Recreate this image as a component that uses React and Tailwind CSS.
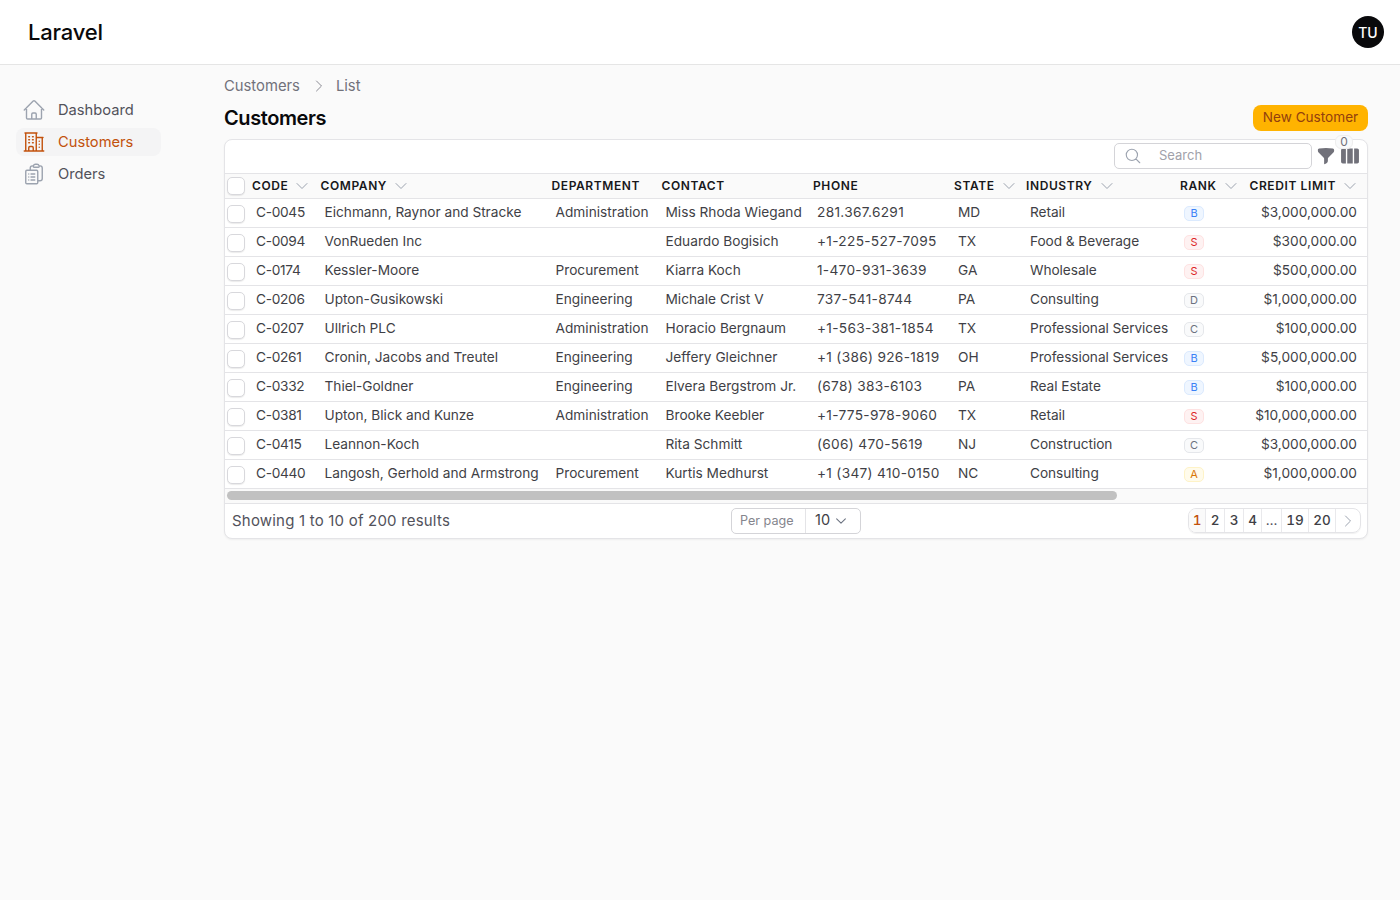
const home = "m2.25 12 8.954-8.955c.44-.439 1.152-.439 1.591 0L21.75 12M4.5 9.75v10.125c0 .621.504 1.125 1.125 1.125H9.75v-4.875c0-.621.504-1.125 1.125-1.125h2.25c.621 0 1.125.504 1.125 1.125V21h4.125c.621 0 1.125-.504 1.125-1.125V9.75M8.25 21h8.25";
const office = "M2.25 21h19.5m-18-18v18m10.5-18v18m6-13.5V21M6.75 6.75h.75m-.75 3h.75m-.75 3h.75m3-6h.75m-.75 3h.75m-.75 3h.75M6.75 21v-3.375c0-.621.504-1.125 1.125-1.125h2.25c.621 0 1.125.504 1.125 1.125V21M3 3h12m-.75 4.5H21m-3.75 3.75h.008v.008h-.008v-.008Zm0 3h.008v.008h-.008v-.008Zm0 3h.008v.008h-.008v-.008Z";
const clip = "M9 12h3.75M9 15h3.75M9 18h3.75m3 .75H18a2.25 2.25 0 0 0 2.25-2.25V6.108c0-1.135-.845-2.098-1.976-2.192a48.424 48.424 0 0 0-1.123-.08m-5.801 0c-.065.21-.1.433-.1.664 0 .414.336.75.75.75h4.5a.75.75 0 0 0 .75-.75 2.25 2.25 0 0 0-.1-.664m-5.8 0A2.251 2.251 0 0 1 13.5 2.25H15c1.012 0 1.867.668 2.15 1.586m-5.8 0c-.376.023-.75.05-1.124.08C9.095 4.01 8.25 4.973 8.25 6.108V8.25m0 0H4.875c-.621 0-1.125.504-1.125 1.125v11.25c0 .621.504 1.125 1.125 1.125h9.75c.621 0 1.125-.504 1.125-1.125V9.375c0-.621-.504-1.125-1.125-1.125H8.25ZM6.75 12h.008v.008H6.75V12Zm0 3h.008v.008H6.75V15Zm0 3h.008v.008H6.75V18Z";
const funnel = "M3.792 2.938A49.069 49.069 0 0 1 12 2.25c2.797 0 5.54.236 8.209.688a1.857 1.857 0 0 1 1.541 1.836v1.044a3 3 0 0 1-.879 2.121l-6.182 6.182a1.5 1.5 0 0 0-.439 1.061v2.927a3 3 0 0 1-1.658 2.684l-1.757.878A.75.75 0 0 1 9.75 21v-5.818a1.5 1.5 0 0 0-.44-1.06L3.13 7.938a3 3 0 0 1-.879-2.121V4.774c0-.897.64-1.683 1.542-1.836Z";
const columns = "M15 3.75H9v16.5h6V3.75ZM16.5 20.25h3.375c1.035 0 1.875-.84 1.875-1.875V5.625c0-1.036-.84-1.875-1.875-1.875H16.5v16.5ZM4.125 3.75H7.5v16.5H4.125a1.875 1.875 0 0 1-1.875-1.875V5.625c0-1.036.84-1.875 1.875-1.875Z";
const search = "m21 21-5.197-5.197m0 0A7.5 7.5 0 1 0 5.196 5.196a7.5 7.5 0 0 0 10.607 10.607Z";
const down = "m19.5 8.25-7.5 7.5-7.5-7.5";
const right = "m8.25 4.5 7.5 7.5-7.5 7.5";

function Stroke({ d, className, sw = 1.5 }) {
  return (
    <svg viewBox="0 0 24 24" fill="none" stroke="currentColor" strokeWidth={sw} strokeLinecap="round" strokeLinejoin="round" className={className}>
      <path d={d} />
    </svg>
  );
}
function Solid({ d, className }) {
  return (
    <svg viewBox="0 0 24 24" fill="currentColor" className={className}>
      <path d={d} fillRule="evenodd" clipRule="evenodd" />
    </svg>
  );
}

const rows = [
  ["C-0045", "Eichmann, Raynor and Stracke", "Administration", "Miss Rhoda Wiegand", "281.367.6291", "MD", "Retail", "B", "$3,000,000.00"],
  ["C-0094", "VonRueden Inc", "", "Eduardo Bogisich", "+1-225-527-7095", "TX", "Food & Beverage", "S", "$300,000.00"],
  ["C-0174", "Kessler-Moore", "Procurement", "Kiarra Koch", "1-470-931-3639", "GA", "Wholesale", "S", "$500,000.00"],
  ["C-0206", "Upton-Gusikowski", "Engineering", "Michale Crist V", "737-541-8744", "PA", "Consulting", "D", "$1,000,000.00"],
  ["C-0207", "Ullrich PLC", "Administration", "Horacio Bergnaum", "+1-563-381-1854", "TX", "Professional Services", "C", "$100,000.00"],
  ["C-0261", "Cronin, Jacobs and Treutel", "Engineering", "Jeffery Gleichner", "+1 (386) 926-1819", "OH", "Professional Services", "B", "$5,000,000.00"],
  ["C-0332", "Thiel-Goldner", "Engineering", "Elvera Bergstrom Jr.", "(678) 383-6103", "PA", "Real Estate", "B", "$100,000.00"],
  ["C-0381", "Upton, Blick and Kunze", "Administration", "Brooke Keebler", "+1-775-978-9060", "TX", "Retail", "S", "$10,000,000.00"],
  ["C-0415", "Leannon-Koch", "", "Rita Schmitt", "(606) 470-5619", "NJ", "Construction", "C", "$3,000,000.00"],
  ["C-0440", "Langosh, Gerhold and Armstrong", "Procurement", "Kurtis Medhurst", "+1 (347) 410-0150", "NC", "Consulting", "A", "$1,000,000.00"],
];

const colClass = [
  "tracking-[-0.3px]",
  "tracking-[-0.02px]",
  "",
  "",
  "tracking-[0.3px]",
  "",
  "tracking-[-0.07px]",
];

const rankStyle = {
  B: "bg-[#eff6ff] border-[#dbeafe] text-[#3b82f6]",
  S: "bg-[#fef2f2] border-[#fee2e2] text-[#dc2626]",
  D: "bg-[#f9fafb] border-[#e5e7eb] text-[#6b7280]",
  C: "bg-[#f9fafb] border-[#e5e7eb] text-[#6b7280]",
  A: "bg-[#fffbeb] border-[#fef3c7] text-[#d97706]",
};

function Check() {
  return <span className="block h-[18px] w-[18px] rounded-[5px] border border-[#d8d8dc] bg-white shadow-[0_1px_1px_rgba(0,0,0,0.08)]" />;
}

function Head({ label, sort, width }) {
  return (
    <th className="pl-1 pt-[1px] text-left font-semibold" style={{ width }}>
      <span className="flex items-center">
        <span className="text-[12px] leading-4 tracking-[0.6px] text-[#18181b]">{label}</span>
        {sort && <Stroke d={down} className="ml-[6px] h-4 w-4 text-[#9ca3af]" />}
      </span>
    </th>
  );
}

const nav = [
  ["Dashboard", home, false],
  ["Customers", office, true],
  ["Orders", clip, false],
];

const pages = [
  ["1", "w-[17px] bg-[#fafafa] text-[#c2510c]"],
  ["2", "w-[19px] text-[#3f3f46]"],
  ["3", "w-[19px] text-[#3f3f46]"],
  ["4", "w-[18px] text-[#3f3f46]"],
  ["…", "w-[20px] font-normal text-[#52525b]"],
  ["19", "w-[27px] text-[#3f3f46]"],
  ["20", "w-[27px] text-[#3f3f46]"],
];

export default function App() {
  return (
    <div className="min-h-[900px] bg-[#fafafa] font-['Inter',sans-serif] text-[13.7px] text-[#3f3f46]">
      <header className="flex h-[65px] items-center justify-between border-b border-[#e5e5e5] bg-white pl-[28px] pr-[16px]">
        <span className="text-[22px] font-medium tracking-[-0.2px] text-[#09090b]">Laravel</span>
        <span className="flex h-8 w-8 items-center justify-center rounded-full bg-[#09090b] text-[14px] font-medium text-white">TU</span>
      </header>
      <div className="flex">
        <aside className="w-[224px] shrink-0 pl-[16px] pt-[31px]">
          {nav.map(([label, d, active]) => (
            <div key={label} className={`mb-1 flex h-[28px] w-[145px] items-center rounded-lg pl-[6px] ${active ? "bg-[#f4f4f5] text-[#c2510c]" : "text-[#52525b]"}`}>
              <Stroke d={d} className={`h-6 w-6 ${active ? "text-[#c2510c]" : "text-[#9ca3af]"}`} sw={1.4} />
              <span className="ml-3 text-[14.7px]">{label}</span>
            </div>
          ))}
        </aside>
        <main className="w-[1144px]">
          <div className="flex h-[40px] items-center pt-[2px] text-[14.8px] text-[#71717a]">
            <span>Customers</span>
            <Stroke d={right} className="ml-[11px] mr-[9px] h-4 w-4 text-[#8b8b94]" />
            <span>List</span>
          </div>
          <div className="flex h-[26px] items-center justify-between">
            <h1 className="text-[20px] font-semibold tracking-[-0.4px] text-[#09090b]">Customers</h1>
            <button className="h-[26px] w-[115px] rounded-lg bg-[#ffb300] pb-[1px] text-[13.6px] text-[#92400e]">New Customer</button>
          </div>
          <section className="mt-2 rounded-lg border border-[#e4e4e7] bg-white shadow-[0_1px_2px_rgba(0,0,0,0.05)]">
            <div className="flex h-[34px] items-center justify-end border-b border-[#e4e4e7] pb-[2px] pr-[6px]">
              <div className="flex h-[26px] w-[198px] items-center rounded-[5px] border border-[#d4d4d8] pl-[9px] text-[13px] text-[#a1a1aa]">
                <Stroke d={search} className="h-[18px] w-[18px] text-[#9ca3af]" />
                <span className="ml-[17px]">Search</span>
              </div>
              <Solid d={funnel} className="ml-1 h-5 w-5 text-[#71717a]" />
              <div className="relative ml-[3px]">
                <Solid d={columns} className="h-[22px] w-[22px] text-[#71717a]" />
                <span className="absolute left-[-4px] top-[-10px] flex h-[14px] w-[18px] items-center justify-center rounded-md border border-[#eeeeee] bg-[#f9fafb] text-[12px] text-[#71717a]">0</span>
              </div>
            </div>
            <table className="w-[1142px] table-fixed border-collapse">
              <thead>
                <tr className="h-[24px] border-b border-[#e4e4e7] bg-[#fafafa]">
                  <th className="w-[23px] pl-[2px] pt-[1px]"><Check /></th>
                  <Head label="CODE" sort width={68.5} />
                  <Head label="COMPANY" sort width={231} />
                  <Head label="DEPARTMENT" width={110} />
                  <Head label="CONTACT" width={151.5} />
                  <Head label="PHONE" width={141} />
                  <Head label="STATE" sort width={72} />
                  <Head label="INDUSTRY" sort width={154} />
                  <Head label="RANK" sort width={69.5} />
                  <Head label="CREDIT LIMIT" sort />
                </tr>
              </thead>
              <tbody>
                {rows.map((r) => (
                  <tr key={r[0]} className="h-[29px] border-b border-[#e4e4e7]">
                    <td className="pl-[2px] pt-[2px]"><Check /></td>
                    {r.slice(0, 7).map((c, i) => (
                      <td key={i} className={`truncate pl-2 ${colClass[i]}`}>{c}</td>
                    ))}
                    <td className="pl-2 pt-[1px]">
                      <span className={`flex h-[15px] w-5 items-center justify-center rounded-[5px] border text-[11px] ${rankStyle[r[7]]}`}>{r[7]}</span>
                    </td>
                    <td className="pr-[10px] text-right">{r[8]}</td>
                  </tr>
                ))}
              </tbody>
            </table>
            <div className="border-b border-[#e4e4e7] bg-[#fafafa] pb-[3px] pl-[2px] pt-[2px]">
              <div className="h-[9px] w-[890px] rounded-full bg-[#c1c1c1]" />
            </div>
            <div className="flex h-[34px] items-center justify-between pl-[7px] pr-[6px]">
              <span className="w-[499px] pt-[2px] text-[15px] tracking-[0.2px] text-[#52525b]">Showing 1 to 10 of 200 results</span>
              <div className="flex h-[26px] w-[130px] items-center rounded-[5px] border border-[#d4d4d8] text-[12.6px]">
                <span className="flex h-full w-[74px] items-center border-r border-[#e4e4e7] pl-2 pt-[2px] text-[#85858d]">Per page</span>
                <span className="ml-[9px] pb-[1px] text-[14.5px] text-[#3f3f46]">10</span>
                <Stroke d={down} className="ml-1 h-[14px] w-[14px] text-[#6b7280]" sw={1.8} />
              </div>
              <div className="ml-auto flex h-[25px] w-[173px] overflow-hidden rounded-lg border border-[#e4e4e7] shadow-[0_1px_1px_rgba(0,0,0,0.06)]">
                {pages.map(([p, cls]) => (
                  <span key={p} className={`flex items-center justify-center border-r border-[#e9e9ec] pb-[1px] text-[13.5px] font-medium tabular-nums ${cls}`}>{p}</span>
                ))}
                <span className="flex flex-1 items-center justify-center">
                  <Stroke d={right} className="h-4 w-4 text-[#9ca3af]" />
                </span>
              </div>
            </div>
          </section>
        </main>
      </div>
    </div>
  );
}
